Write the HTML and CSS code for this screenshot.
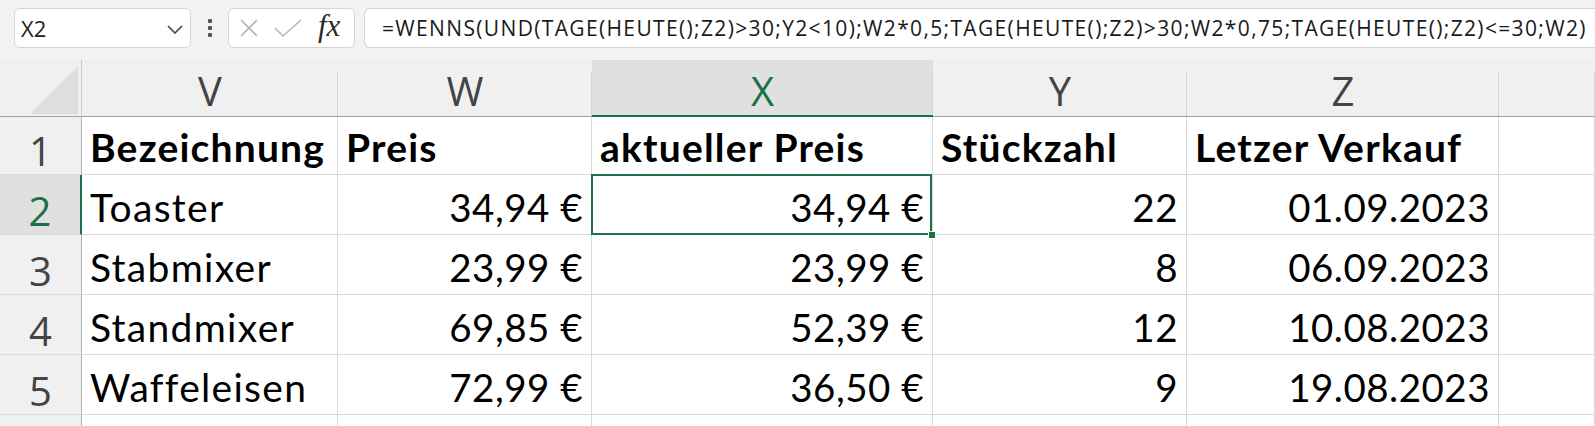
FILE: index.html
```html
<!DOCTYPE html>
<html lang="de">
<head>
<meta charset="utf-8">
<title>Excel</title>
<link rel="stylesheet" href="styles.css">
</head>
<body>
<div class="toolbar">
  <div class="namebox">
    <span class="name">X2</span>
    <svg class="chev" width="16" height="9" viewBox="0 0 16 9"><path d="M1 1 L8 8 L15 1" fill="none" stroke="#444" stroke-width="1.6"/></svg>
  </div>
  <div class="dots"><i></i><i></i><i></i></div>
  <div class="fxbox">
    <svg class="ic" width="22" height="22" viewBox="0 0 22 22"><path d="M3 3 L19 19 M19 3 L3 19" stroke="#b5b5b5" stroke-width="1.6" fill="none"/></svg>
    <svg class="ic" width="28" height="20" viewBox="0 0 28 20"><path d="M1 10 L9 18 L27 2" stroke="#b5b5b5" stroke-width="1.6" fill="none"/></svg>
    <span class="fx">fx</span>
  </div>
  <div class="formula">=WENNS(UND(TAGE(HEUTE();Z2)&gt;30;Y2&lt;10);W2*0,5;TAGE(HEUTE();Z2)&gt;30;W2*0,75;TAGE(HEUTE();Z2)&lt;=30;W2)</div>
</div>
<div class="sheet">
  <div class="corner"><span class="tri"></span></div>
  <div class="ch">V</div>
  <div class="ch">W</div>
  <div class="ch sel">X</div>
  <div class="ch">Y</div>
  <div class="ch">Z</div>
  <div class="ch"></div>

  <div class="rh">1</div>
  <div class="c b">Bezeichnung</div>
  <div class="c b">Preis</div>
  <div class="c b">aktueller Preis</div>
  <div class="c b">Stückzahl</div>
  <div class="c b">Letzer Verkauf</div>
  <div class="c"></div>

  <div class="rh sel">2</div>
  <div class="c t">Toaster</div>
  <div class="c r">34,94 €</div>
  <div class="c r active">34,94 €<span class="handle"></span></div>
  <div class="c r">22</div>
  <div class="c r">01.09.2023</div>
  <div class="c"></div>

  <div class="rh">3</div>
  <div class="c t">Stabmixer</div>
  <div class="c r">23,99 €</div>
  <div class="c r">23,99 €</div>
  <div class="c r">8</div>
  <div class="c r">06.09.2023</div>
  <div class="c"></div>

  <div class="rh">4</div>
  <div class="c t">Standmixer</div>
  <div class="c r">69,85 €</div>
  <div class="c r">52,39 €</div>
  <div class="c r">12</div>
  <div class="c r">10.08.2023</div>
  <div class="c"></div>

  <div class="rh">5</div>
  <div class="c t">Waffeleisen</div>
  <div class="c r">72,99 €</div>
  <div class="c r">36,50 €</div>
  <div class="c r">9</div>
  <div class="c r">19.08.2023</div>
  <div class="c"></div>

  <div class="rh"></div>
  <div class="c"></div>
  <div class="c"></div>
  <div class="c"></div>
  <div class="c"></div>
  <div class="c"></div>
  <div class="c"></div>
</div>
</body>
</html>
```
FILE: styles.css
```css
* { box-sizing: border-box; }
html, body { margin: 0; padding: 0; }
body {
  width: 1595px;
  height: 426px;
  overflow: hidden;
  background: #f3f3f3;
  font-family: "Open Sans", "Noto Sans", sans-serif;
}
.toolbar {
  height: 60px;
  display: flex;
  align-items: flex-start;
  padding: 8px 0 0 14px;
  background: #f3f3f3;
}
.namebox {
  width: 177px;
  height: 40px;
  background: #fff;
  border: 1px solid #d4d4d4;
  border-radius: 6px;
  display: flex;
  align-items: center;
  justify-content: space-between;
  padding: 0 7px 0 6px;
}
.name { font-size: 22px; color: #222; }
.chev { margin-top: 2px; }
.dots {
  width: 37px;
  height: 40px;
  display: flex;
  flex-direction: column;
  align-items: center;
  justify-content: center;
  gap: 3px;
}
.dots i { display: block; width: 4px; height: 4px; background: #555; border-radius: 1px; }
.fxbox {
  width: 127px;
  height: 40px;
  background: #fff;
  border: 1px solid #d4d4d4;
  border-radius: 6px;
  display: flex;
  align-items: center;
  padding: 0 0 0 9px;
  gap: 16px;
}
.fxbox .ic:nth-child(2) { margin-left: -2px; }
.fx {
  font-family: "Liberation Serif", "DejaVu Serif", serif;
  font-style: italic;
  font-size: 31px;
  color: #2b2b2b;
  margin-top: -4px;
}
.formula {
  margin-left: 9px;
  flex: 1;
  height: 40px;
  background: #fff;
  border: 1px solid #d4d4d4;
  border-right: none;
  border-radius: 6px 0 0 6px;
  padding-left: 17px;
  font-size: 21px;
  letter-spacing: 1.35px;
  line-height: 38px;
  color: #1a1a1a;
  white-space: nowrap;
  overflow: hidden;
}
.sheet {
  display: grid;
  grid-template-columns: 82px 256px 254px 341px 254px 312px 1fr;
  grid-template-rows: 57px 58px 60px 60px 60px 60px 11px;
  background: #fff;
}
.sheet > :nth-last-child(-n+7) { border-bottom: none; }
.corner {
  background: #f0f0f0;
  border-right: 1px solid #c8c8c8;
  border-bottom: 1px solid #a0a0a0;
  display: flex;
  justify-content: flex-end;
  align-items: flex-end;
  padding: 0 3px 2px 0;
}
.tri {
  width: 0; height: 0;
  border-left: 48px solid transparent;
  border-bottom: 48px solid #dedede;
}
.ch {
  background: #f0f0f0;
  border-bottom: 1px solid #a0a0a0;
  display: flex;
  justify-content: center;
  align-items: flex-end;
  font-size: 40px;
  line-height: 40px;
  padding-bottom: 5px;
  color: #444;
  position: relative;
}
.ch::after {
  content: "";
  position: absolute;
  right: 0;
  top: 12px;
  bottom: 0;
  width: 1px;
  background: #d6d6d6;
}
.ch.sel {
  background: #e0e0e0;
  color: #1e7145;
  border-bottom: 2px solid #1e7145;
  padding-bottom: 4px;
}
.rh {
  background: #f0f0f0;
  border-right: 1px solid #b4b4b4;
  border-bottom: 1px solid #dadada;
  display: flex;
  justify-content: center;
  align-items: flex-end;
  font-size: 40px;
  line-height: 40px;
  padding-bottom: 3px;
  color: #444;
}
.rh.sel {
  background: #e0e0e0;
  color: #1e7145;
  border-right: 2px solid #1e7145;
}
.c {
  border-right: 1px solid #dadada;
  border-bottom: 1px solid #dadada;
  display: flex;
  align-items: flex-end;
  padding: 0 9px 6px 8px;
  font-family: Lato, "Liberation Sans", sans-serif;
  font-size: 38.5px;
  line-height: 42px;
  color: #000;
  white-space: nowrap;
}
.c.t { font-size: 39px; letter-spacing: 1.3px; }
.c.b { font-weight: 700; font-size: 39px; letter-spacing: 1.2px; }
.c.r { justify-content: flex-end; letter-spacing: 0.5px; padding-right: 8px; }
.active { position: relative; }
.active::after {
  content: "";
  position: absolute;
  left: -1px;
  top: -1px;
  right: 0;
  bottom: -1px;
  border: 2px solid #1e7145;
  pointer-events: none;
}
.handle {
  position: absolute;
  right: -4px;
  bottom: -5px;
  width: 8px;
  height: 8px;
  background: #1e7145;
  border: 1px solid #fff;
  z-index: 2;
}
```
